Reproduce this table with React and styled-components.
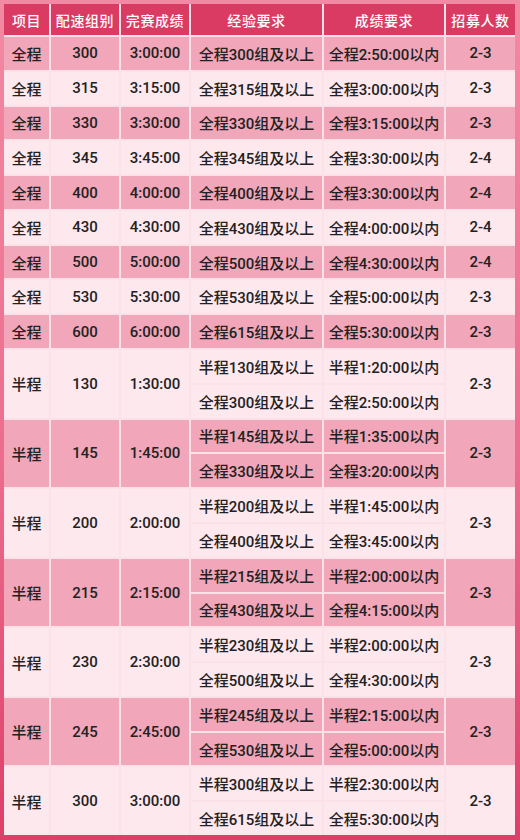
import React from 'react';
import styled, { createGlobalStyle } from 'styled-components';

const GlobalStyle = createGlobalStyle`
  html, body {
    margin: 0;
    padding: 0;
  }
  body {
    width: 520px;
    height: 840px;
    overflow: hidden;
    font-family: Roboto, "Noto Sans CJK SC", sans-serif;
  }
`;

const full = [
  ['300', '3:00:00', '全程300组及以上', '全程2:50:00以内', '2-3'],
  ['315', '3:15:00', '全程315组及以上', '全程3:00:00以内', '2-3'],
  ['330', '3:30:00', '全程330组及以上', '全程3:15:00以内', '2-3'],
  ['345', '3:45:00', '全程345组及以上', '全程3:30:00以内', '2-4'],
  ['400', '4:00:00', '全程400组及以上', '全程3:30:00以内', '2-4'],
  ['430', '4:30:00', '全程430组及以上', '全程4:00:00以内', '2-4'],
  ['500', '5:00:00', '全程500组及以上', '全程4:30:00以内', '2-4'],
  ['530', '5:30:00', '全程530组及以上', '全程5:00:00以内', '2-3'],
  ['600', '6:00:00', '全程615组及以上', '全程5:30:00以内', '2-3'],
];

const half = [
  ['130', '1:30:00', ['半程130组及以上', '全程300组及以上'], ['半程1:20:00以内', '全程2:50:00以内'], '2-3'],
  ['145', '1:45:00', ['半程145组及以上', '全程330组及以上'], ['半程1:35:00以内', '全程3:20:00以内'], '2-3'],
  ['200', '2:00:00', ['半程200组及以上', '全程400组及以上'], ['半程1:45:00以内', '全程3:45:00以内'], '2-3'],
  ['215', '2:15:00', ['半程215组及以上', '全程430组及以上'], ['半程2:00:00以内', '全程4:15:00以内'], '2-3'],
  ['230', '2:30:00', ['半程230组及以上', '全程500组及以上'], ['半程2:00:00以内', '全程4:30:00以内'], '2-3'],
  ['245', '2:45:00', ['半程245组及以上', '全程530组及以上'], ['半程2:15:00以内', '全程5:00:00以内'], '2-3'],
  ['300', '3:00:00', ['半程300组及以上', '全程615组及以上'], ['半程2:30:00以内', '全程5:30:00以内'], '2-3'],
];

const headers = ['项目', '配速组别', '完赛成绩', '经验要求', '成绩要求', '招募人数'];

const Frame = styled.div`
  width: 520px;
  height: 840px;
  box-sizing: border-box;
  padding: 4px 5px 5px 4px;
  background: linear-gradient(180deg, #f28aa3 0%, #ec6d8e 55%, #dc4069 100%);
`;

const Table = styled.div`
  display: grid;
  grid-template-columns: 45px 68px 68px 131px 120px 69px;
  grid-template-rows: 31px repeat(23, 1fr);
  gap: 2px;
  height: 831px;
  background: #fbe2e9;
`;

const HeadCell = styled.div`
  display: flex;
  align-items: center;
  justify-content: center;
  background: #d93b63;
  color: #fff;
  font-size: 14px;
  font-weight: 500;
  letter-spacing: 0.6px;
`;

const Cell = styled.div`
  display: flex;
  align-items: center;
  justify-content: center;
  grid-row: span ${p => p.$span || 1};
  background: ${p => (p.$dark ? '#f1a6b9' : '#fde8ee')};
  color: #222;
  font-size: 15px;
  font-weight: 500;
  white-space: nowrap;
`;

export default function App() {
  let idx = 0;
  return (
    <>
      <GlobalStyle />
      <Frame>
        <Table>
          {headers.map(h => <HeadCell key={h}>{h}</HeadCell>)}
          {full.map(([pace, time, exp, res, num]) => {
            const dark = idx++ % 2 === 0;
            return (
              <React.Fragment key={'f' + pace}>
                <Cell $dark={dark}>全程</Cell>
                <Cell $dark={dark}>{pace}</Cell>
                <Cell $dark={dark}>{time}</Cell>
                <Cell $dark={dark}>{exp}</Cell>
                <Cell $dark={dark}>{res}</Cell>
                <Cell $dark={dark}>{num}</Cell>
              </React.Fragment>
            );
          })}
          {half.map(([pace, time, exp, res, num]) => {
            const dark = idx++ % 2 === 0;
            return (
              <React.Fragment key={'h' + pace}>
                <Cell $dark={dark} $span={2}>半程</Cell>
                <Cell $dark={dark} $span={2}>{pace}</Cell>
                <Cell $dark={dark} $span={2}>{time}</Cell>
                <Cell $dark={dark}>{exp[0]}</Cell>
                <Cell $dark={dark}>{res[0]}</Cell>
                <Cell $dark={dark} $span={2}>{num}</Cell>
                <Cell $dark={dark}>{exp[1]}</Cell>
                <Cell $dark={dark}>{res[1]}</Cell>
              </React.Fragment>
            );
          })}
        </Table>
      </Frame>
    </>
  );
}
